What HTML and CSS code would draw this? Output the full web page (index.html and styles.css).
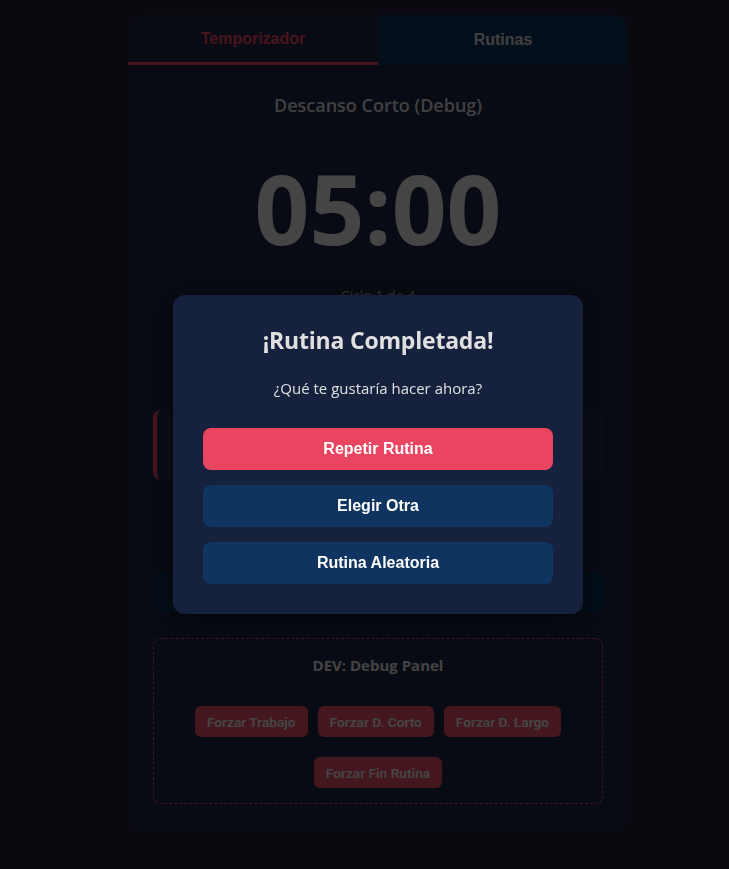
FILE: index.html
```html
<!DOCTYPE html>
<html lang="es">
<head>
<meta charset="utf-8">
<title>Temporizador</title>
<link rel="stylesheet" href="styles.css">
</head>
<body>
<main class="app">
  <nav class="tabs">
    <button class="tab tab-active">Temporizador</button>
    <button class="tab tab-inactive">Rutinas</button>
  </nav>
  <section class="content">
    <h2 class="mode">Descanso Corto (Debug)</h2>
    <div class="timer">05:00</div>
    <p class="cycle">Ciclo 1 de 4</p>
    <div class="controls"></div>
    <div class="routine-card"></div>
    <div class="routine-btn"></div>
    <div class="debug">
      <h3 class="debug-title">DEV: Debug Panel</h3>
      <div class="debug-buttons">
        <button class="dbtn">Forzar Trabajo</button>
        <button class="dbtn">Forzar D. Corto</button>
        <button class="dbtn">Forzar D. Largo</button>
        <button class="dbtn">Forzar Fin Rutina</button>
      </div>
    </div>
  </section>
</main>
<div class="overlay">
  <div class="modal">
    <h2 class="modal-title">¡Rutina Completada!</h2>
    <p class="modal-text">¿Qué te gustaría hacer ahora?</p>
    <div class="modal-actions">
      <button class="mbtn mbtn-primary">Repetir Rutina</button>
      <button class="mbtn mbtn-secondary">Elegir Otra</button>
      <button class="mbtn mbtn-secondary">Rutina Aleatoria</button>
    </div>
  </div>
</div>
</body>
</html>
```

FILE: styles.css
```css
* { box-sizing: border-box; }
html, body { margin: 0; }
body {
  background: #221e36;
  font-family: "Open Sans", "Noto Sans", sans-serif;
  color: #e0e0e0;
  padding: 15px 0 40px 27px;
  min-height: 869px;
}
.app {
  width: 500px;
  margin: 0 auto;
  background: #1e2543;
  border-radius: 16px;
  overflow: hidden;
}
.tabs { display: flex; height: 50px; }
.tab {
  flex: 1;
  border: none;
  background: transparent;
  font-family: "Liberation Sans", Arial, sans-serif;
  font-weight: bold;
  font-size: 16px;
  color: #d8d8d8;
  padding: 0;
}
.tab-active { color: #e94560; border-bottom: 3px solid #e94560; }
.tab-inactive { background: #0f3460; }
.content { padding: 25px 25px 28px; text-align: center; }
.mode {
  margin: 3px 0 0;
  font-size: 18px;
  line-height: 24px;
  font-weight: 600;
  color: #d8d8d8;
}
.timer {
  margin-top: 33px;
  font-size: 96px;
  line-height: 115px;
  font-weight: 700;
  color: #e6e6e6;
}
.cycle {
  margin: 21px 0 0;
  font-size: 14px;
  line-height: 20px;
  color: #aaa;
}
.controls {
  margin-top: 20px;
  height: 45px;
}
.routine-card {
  margin-top: 39px;
  height: 70px;
  border-radius: 8px;
  background: #262c48;
  border-left: 4px solid #e94560;
}
.routine-btn {
  margin-top: 92px;
  height: 40px;
  border-radius: 8px;
  background: #0c2f56;
}
.debug {
  margin-top: 26px;
  height: 166px;
  border: 1px dashed #e94560;
  border-radius: 8px;
  padding: 16px 20px 15px;
}
.debug-title {
  margin: 0;
  font-size: 15px;
  line-height: 20px;
  font-weight: 700;
  color: #e0e0e0;
}
.debug-buttons {
  display: flex;
  flex-wrap: wrap;
  justify-content: center;
  gap: 20px 10px;
  margin-top: 31px;
}
.dbtn {
  border: none;
  border-radius: 6px;
  background: #f0506a;
  color: #f2f2f2;
  font-family: Roboto, "Liberation Sans", sans-serif;
  font-weight: 600;
  font-size: 13.7px;
  height: 31px;
  padding: 0 12px;
  opacity: 0.95;
}
.overlay {
  position: fixed;
  inset: 0;
  background: rgba(0, 0, 0, 0.7);
  display: flex;
  justify-content: center;
  align-items: center;
  padding: 39px 0 0 27px;
}
.modal {
  width: 410px;
  background: #16213e;
  border-radius: 12px;
  padding: 30px;
  text-align: center;
  box-shadow: 0 6px 24px rgba(0, 0, 0, 0.5);
}
.modal-title {
  margin: 0;
  font-size: 23px;
  letter-spacing: -0.2px;
  line-height: 31px;
  font-weight: 700;
  color: #e0e0e0;
}
.modal-text {
  margin: 21px 0 0;
  font-size: 15px;
  line-height: 22px;
  color: #e0e0e0;
}
.modal-actions {
  display: flex;
  flex-direction: column;
  gap: 15px;
  margin-top: 29px;
}
.mbtn {
  height: 42px;
  border: none;
  border-radius: 8px;
  color: #fff;
  font-family: "Liberation Sans", Arial, sans-serif;
  font-weight: bold;
  font-size: 16px;
}
.mbtn-primary { background: #e94560; }
.mbtn-secondary { background: #0f3460; }
```
